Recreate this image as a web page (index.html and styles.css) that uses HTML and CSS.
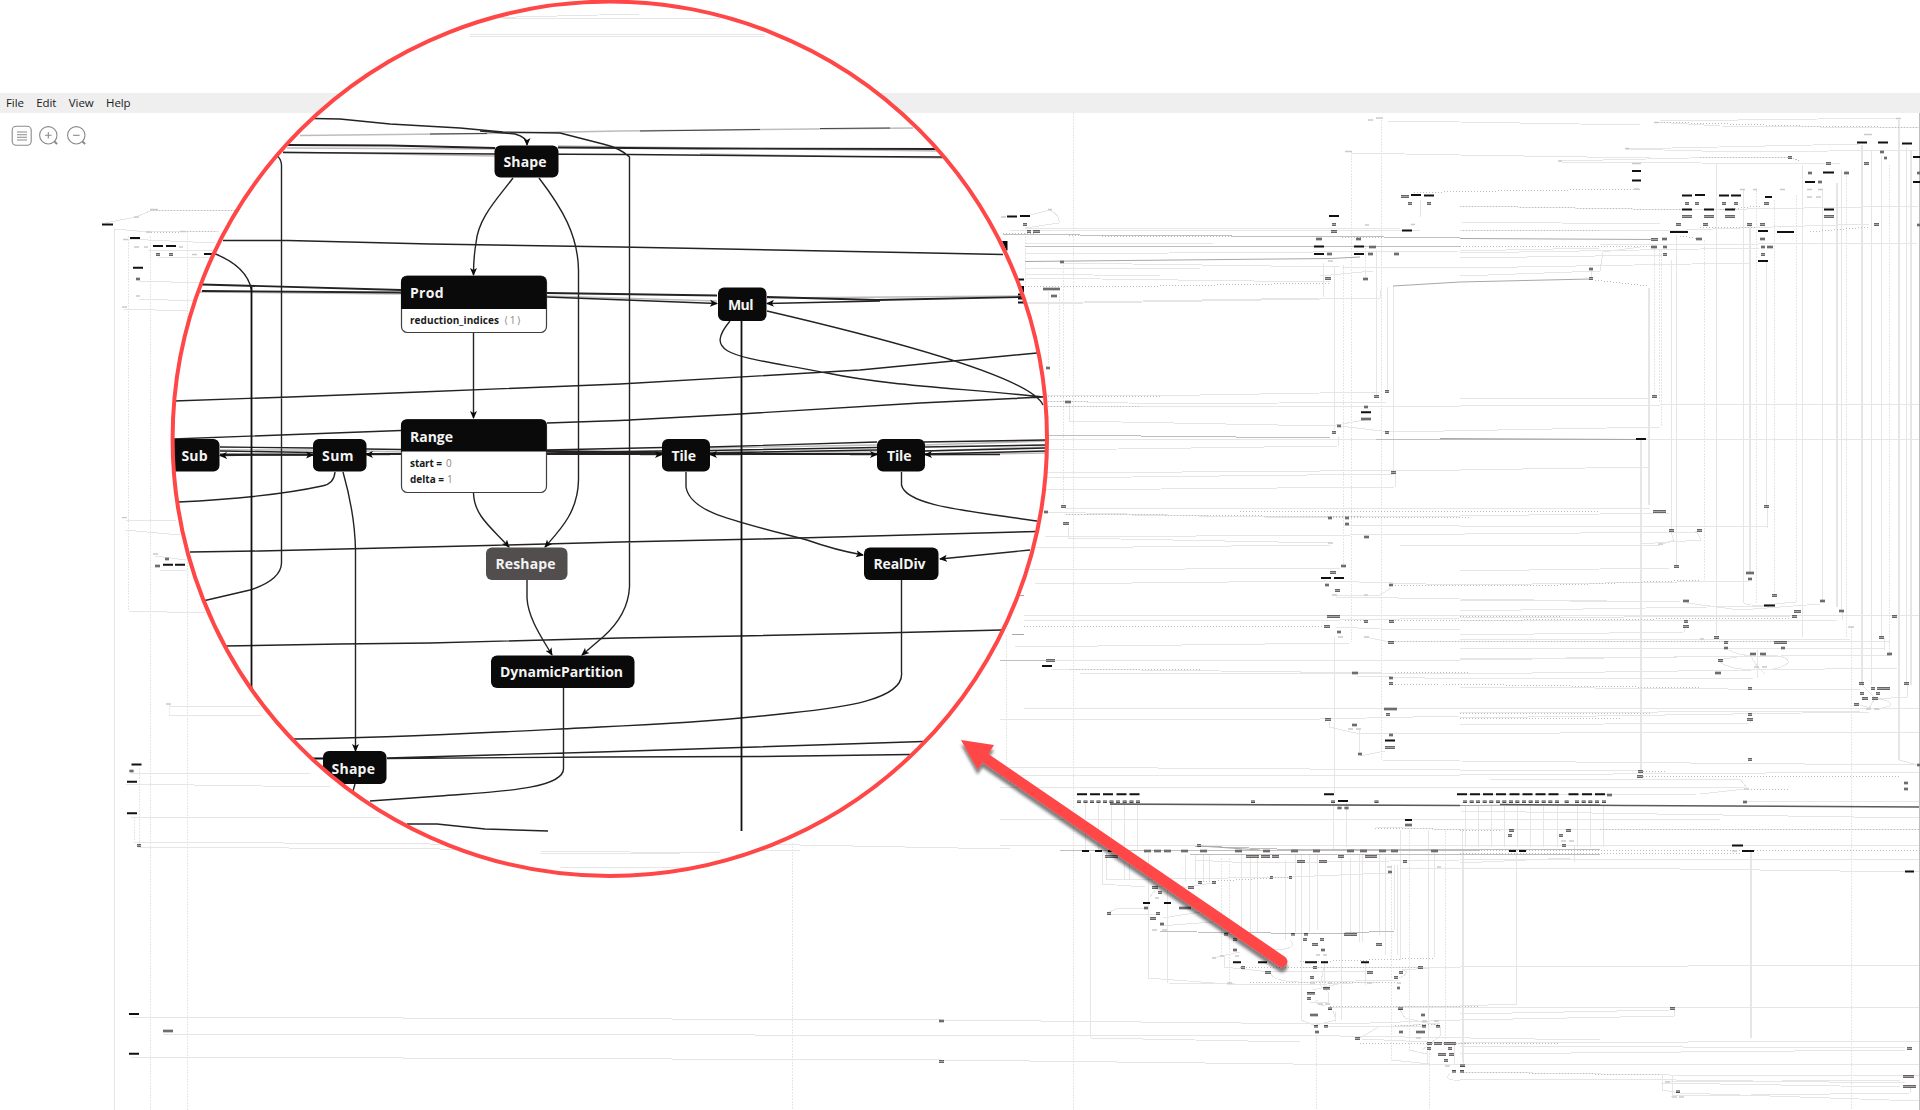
FILE: index.html
```html
<!DOCTYPE html>
<html lang="en">
<head>
<meta charset="utf-8">
<title>Model graph viewer</title>
<link rel="stylesheet" href="styles.css">
</head>
<body>
<div class="app">
  <nav class="menubar"><span>File</span><span>Edit</span><span>View</span><span>Help</span></nav>
  <div class="toolbar">
    <svg width="22" height="22" viewBox="0 0 22 22"><rect x="1.2" y="1.2" width="19" height="19" rx="4"/><path d="M6 7h10M6 9.7h10M6 12.3h10M6 15h10"/></svg>
    <svg width="22" height="22" viewBox="0 0 22 22"><circle cx="10.3" cy="10.3" r="8.7"/><path d="M10.3 7v6.600M7 10.300h6.600"/><path class="grip" d="M16.500 16.500l2.600 2.600"/></svg>
    <svg width="22" height="22" viewBox="0 0 22 22"><circle cx="10.3" cy="10.3" r="8.7"/><path d="M7 10.300h6.600"/><path class="grip" d="M16.500 16.500l2.600 2.600"/></svg>
  </div>

  <svg class="graph" width="1920" height="1110" viewBox="0 0 1920 1110">
    <defs>
      <marker id="tip" viewBox="0 0 8 8" refX="7" refY="4" markerWidth="8" markerHeight="8" markerUnits="userSpaceOnUse" orient="auto-start-reverse"><path d="M0 .5L8 4L0 7.500L2 4z"/></marker>
      <clipPath id="lens-clip"><circle cx="609.800" cy="438.800" r="437"/></clipPath>
      <filter id="drop" x="-10%" y="-10%" width="120%" height="125%"><feDropShadow dx="0" dy="5" stdDeviation="1.500" flood-color="#000" flood-opacity=".5"/></filter>
    </defs>

    <!-- long vertical edges of the overview -->
    <path class="faint dots" d="M150.500 236V1110M187.500 232V1110M128.500 236V611M139 768V845M134 817V841M169 705V715M213 255V300M229 256V300M792.500 843V1110M1006 635V765M1073.500 113V1110M1063 265V506M1048.500 292V365M1351.500 152V642M1381.500 120V760M1343.500 265V565M1059.500 293V378M1025.500 233V285M1365.500 245V278M1654.500 247V395M1659 250V402M1661 250V427M1704.500 240V580M1756 190V603M1774.500 200V595M1796.500 195V602M1846.500 170V638M1889.500 165V653M1851 627V1110M1391.700 865V1060M1221.700 858V955M1229.300 858V983M1316.500 1032V1110M1429 1050V1110M1409 830V1050M1445.700 830V1040"/>
    <path class="faint" d="M114.500 228V1110M1334.500 267V430M1334.500 637V790M1376.500 250V395M1387 287V390M1393.500 287V472M1420.500 200V217M1323 263V297M1671.500 260V530M1676.500 235V565M1716.500 164V635M1743.500 190V602M1766.500 262V506M1802.500 165V637M1822.500 190V600M1841.500 170V610M1871.500 150V685M1881.500 155V637M1906.500 147V682M1591 270V278M1463 850V1065M1516.500 850V1005M1574.500 845V862M1465 805V847M1478 805V847M1491.500 805V847M1504.500 805V847M1517.500 805V847M1530.500 805V847M1543.500 805V847M1557 805V847M1577 805V847M1590.500 805V847M1603.500 805V847M1085.500 803V850M1098.500 803V850M1111.500 803V850M1124.500 803V850M1137.500 803V850M1333 803V850M1346.500 803V847M1334.500 780V793M1090.700 853V1038M1102 853V885M1106.700 853V880M1124 858V880M1129 858V880M1148.300 853V978M1167.700 885V983M1185.700 855V882M1195 855V882M1203.300 855V882M1209.300 855V882M1241.500 853V933M1250 855V933M1257.700 855V933M1285.500 860V940M1295 855V932M1301 855V1020M1309 855V932M1317.300 855V930M1341.700 857V1020M1350.700 858V932M1359.500 855V942M1362.500 855V942M1379 855V935M1385 857V955M1394.500 865V930M1397.500 865V955M1400.700 830V960M1428.500 830V1040M1434.300 853V957M1462.700 830V1062M1324 963V988M1365 963V985M1335 1012V1022"/>
    <path class="faint wide" d="M1649 288V505M1750 225V572M1837 183V607M1862 145V683M1899 120V760M1911 150V685M1640.500 440V770M1751 852V1038"/>
    <path class="rim" d="M1919.500 113V1110"/>

    <!-- horizontal edges of the overview -->
    <path class="faint" d="M105 223L136 217L152 210H235M115 229L148 232L220 231M125 239L215 243M147 250L213 251M158 257H210M139 281L203 283M139 299L197 301M124 309L188 311M125 520L176 521M125 530L180 535M155 556L186 560M187 570H160M128 611L205 613M169 706H260M169 715H262M131 773L310 774M125 784L330 787M131 817L380 818M134 842L430 844M138 847L440 849M430 844L800 845L1010 849M440 849L800 851M131 1017L941 1020M163 1034L1340 1036L1600 1040M131 1057L941 1060M941 1020L1340 1024L1460 1020L1674 1016V1010M941 1060L1380 1065L1919 1064"/>
    <path class="faint" d="M1030 215L1050 210Q1060 215 1059 223L1025 228L1400 229M1010 231L1300 230L1420 231M1025 243L1213 244M1025 254L1460 251L1600 248M1063 263L1340 267L1460 268L1750 263M1025 268H1200M1025 274L1160 276H1320L1373 271M1025 278L1330 282M1025 303L1320 298M1025 304L1380 298V290M1387 121L1460 122L1640 125M1350 153L1460 155L1650 158M1660 121L1897 118M1655 122L1720 126L1919 128M1625 149L1860 144M1625 149L1740 152L1919 150M1560 161L1690 158L1790 157M1560 162L1840 164M1460 206L1690 210L1919 206M1460 222L1660 224M1460 230L1660 231L1740 228L1870 224M1600 245L1919 243M1460 253L1760 248M1460 258L1663 255M1460 276L1600 271L1603 252L1640 247"/>
    <path class="faint" d="M1045 396L1200 395L1380 392M1460 399L1650 398M1045 401L1170 404L1388 402M1048 406H1460L1660 405L1919 404M1069 404V421L1330 426L1365 420M1340 426L1390 432L1661 427M1045 439H1919M1045 450L1338 446V436M1045 473L1460 470L1649 467M1045 478L1395 474V487L1045 490M1065 509L1650 508M1045 512L1250 517L1460 516L1670 513M1065 514L1330 518M1045 537L1350 535L1697 532L1701 540L1640 544M1068 527V538L1330 543M1035 548L1330 545M1030 570L1340 568M1035 584L1325 581L1460 585L1750 581M1344 525L1460 526L1767 527V508M1671 533L1674 540L1660 545H1400M1334 595L1380 595L1391 588M1335 597L1460 599L1680 602M1024 615H1919M1024 620H1340L1460 618L1790 616M1336 627L1380 629L1460 630M1365 637L1390 642L1890 641M1015 647L1350 643M1000 660H1460L1750 656M1050 669L1140 670L1460 674L1898 668V655M1080 673H1460M1356 676L1460 679L1757 678V650M1024 708H1919M1000 719L1320 719L1460 716M1329 722V727L1360 734L1560 733L1919 732M1359 730V752M1360 756L1385 751M1382 760L1460 761L1919 765M1006 767L1460 770L1640 771M1000 775H1460L1919 772M1000 788L1460 787L1745 788M1490 779L1740 779L1747 788"/>
    <path class="faint" d="M1460 571L1670 568M1460 600L1680 602M1460 611L1770 606M1460 621L1842 620V612M1460 635L1684 632V627M1460 640L1850 639M1460 648L1884 649V638M1460 659L1890 655M1460 687L1860 690M1687 603L1740 610L1820 604M1743 602Q1745 606 1764 605L1796 602M1729 650Q1740 656 1750 655L1757 666L1765 674M1718 660L1750 655M1762 655Q1790 655 1788 663Q1780 670 1760 670Q1730 670 1720 662M1862 685L1875 698L1868 710M1856 704Q1870 708 1880 710M1876 699Q1893 700 1890 706L1875 710M1907 685V697L1875 699M1899 760L1918 765M1460 713L1860 711M1460 725L1750 723V719M1460 718L1870 712"/>
    <path class="faint" d="M1000 819L1460 819L1720 819M1460 811L1919 818M1460 795L1700 794L1745 789M1745 802L1919 801M1376 827L1460 830L1919 829M1000 845H1919M1195 860L1250 863L1460 860L1919 859M1102 884L1145 887M1106 880L1290 877L1388 873M1188 887L1212 883M1460 863L1570 858M1400 868H1600L1919 872M1300 967L1460 967L1919 965M1167 883L1188 888M1107 913L1116 909L1145 908M1109 914H1160M1150 897L1158 886L1178 887M1163 918L1200 912M1160 926L1225 921M1290 940Q1300 950 1270 950M1212 958L1240 952M1224 955V967L1270 972L1340 971L1367 972M1148 978L1240 985M1168 983L1300 985L1380 982M1271 974Q1275 983 1310 982L1400 980M1313 990L1350 981M1324 968L1320 985L1328 992V1002H1310M1333 1011L1336 1020L1316 1025M1318 1000Q1310 1003 1325 1006M1399 978Q1412 972 1402 970L1445 967M1301 1020L1316 1026M1090 1038L1300 1042M1360 1038L1380 1026H1425M1326 1027L1400 1026L1440 1023M1362 1039L1450 1043M1400 1010L1405 1018L1440 1026V1036L1422 1050M1409 1050L1427 1054M1427 1051V1064M1454 1045V1065M1450 1073Q1440 1083 1470 1079H1600L1905 1083M1391 1060L1430 1064H1464M1330 1008L1460 1006L1516 1004M1345 1007H1919M1460 1014L1670 1010M1460 1043L1919 1041M1460 1046L1905 1048M1460 1054L1905 1050M1463 1072L1670 1075L1919 1076M1662 1075V1090L1680 1093L1919 1101M1672 1075V1096L1910 1093V1088M1665 1082L1900 1080M1660 1083L1900 1087"/>
    <path class="medium dots" d="M150 210H235M148 233L215 231M1003 233L1100 236L1460 237.500M1025 287L1160 286L1330 283M1045 401H1090M1048 406H1140M1045 396H1160M1700 157H1790M1790 157L1800 161M1655 122L1800 126L1919 127.500M1414 193L1460 191.500L1640 189M1460 206L1690 210M1720 210L1760 206M1460 230L1600 231M1700 228L1755 227M1810 232L1870 227M1460 246H1650M1680 236L1700 239M1595 280L1649 286M1066 514L1460 518M1240 511H1600M1330 518L1470 517M1389 585H1560L1700 580M1460 616H1560M1389 621L1790 618M1024 626H1325M1345 620L1364 621M1070 669L1200 670M1389 684H1440L1700 688M1395 672H1470M1389 641H1790M1460 713H1650M1460 718H1620M1640 771H1665M1640 776H1900M1460 830H1500M1600 829.500H1919M1460 850H1919M1460 854L1740 853M1748 789H1790M1300 962L1434 958M1240 967H1420M1250 983L1400 982M1330 1006H1480M1360 1043H1470M1463 1072L1660 1075M1395 1026L1440 1024M1440 1043H1560M1200 882L1290 877M1375 828L1465 829.500"/>
    <path class="medium" d="M1003 234.500L1460 237.500M1025 246L1460 246.500M1045 435L1330 438M1000 660.500H1046M1195 846L1290 849.500L1600 849.500M1060 850.500H1460L1520 849M1190 854H1600M1160 931.500L1345 934M1345 933L1394 931M1376 439H1640"/>
    <path class="strong" d="M1025 261.500L1330 258.500L1360 257M1393 286L1460 282L1590 279M1460 238.500L1655 239.500M1440 438.500L1638 439.500M1110 804.500L1460 805.500L1600 804.500M1200 846L1260 850"/>
    <path class="trunk" d="M1110 804L1460 805.500M1500 804.500L1625 805.500L1919 807"/>

    <!-- overview nodes: filled, outlined, and pale ones -->
    <path class="node" d="M102 224.500h11M130 238h10M153 246h10M166 246h10M204 254h10M133 267.700h10M131.500 764.500h10M127 781.700h10M127 813.300h10M129 1014h10M129 1053.800h10M163 564.700h10M175 564.700h10M1007 216.500h10M1020 216h10M1329 216h10M1314 246.500h10M1354 246.500h10M1314 254h10M1354 254h10M1411 195h10M1424 195.500h10M1402 230.500h10M1361 412.300h10M1857 142.500h10M1878 142.500h10M1902 143.500h10M1823 172.500h11M1805 182h10M1913 157h7M1913 182h7M1632 171h9M1632 180.500h9M1682 195.500h10M1695 195h10M1719 195.500h10M1731 195.500h10M1765 197h7M1682 209.500h10M1704 209.500h10M1725 209.500h10M1824 209.500h10M1670 232h18M1758 231h10M1777 232h17M1758 261h10M1636 439h10M1321 578h10M1334 578h10M1042 666h10M1385 740.500h10M1077 794.300h10M1090 794.300h10M1103 794.300h10M1116.500 794.300h10M1129.500 794.300h10M1324 794.300h10M1338 801h10M1457 794.300h10M1470 794.300h10M1483 794.300h10M1496 794.300h10M1509.500 794.300h10M1522.500 794.300h10M1535.500 794.300h10M1548.500 794.300h10M1568.500 794.300h10M1582 794.300h10M1595 794.300h10M1764 605.500h11M1143 903h7M1164 903h7M1233 962.300h8M1258 962.300h9M1305 962.300h12M1321 962.300h7M1361 962.300h8M1082 851h7M1095 851h7M1108 851h7M1405 820h7M1509 851h7M1519 851h7M1732 845.500h11M1742 851h12M1905 871.500h9"/>
    <g class="hollow">
      <path id="boxes" d="M156 254.500h4M169 254.500h4M136 279h4M129.500 771h4M137 845.600h4M163 1031h10M155 566h5M165 559h4M939 1021h5M939 1061.500h5M1023 224.500h4M1027 231.500h4M1033 231.500h7M1060 262h4M1043 289h17M1051 296h6M1046 368h4M1065 402h6M1332 224.500h4M1331 231.500h6M1316 239h6M1356 239h5M1369 247h7M1327 254h5M1368 254h5M1394 254h5M1325 278.500h6M1363 279h5M1401 196.500h8M1408 203.500h4M1427 203.500h4M1385 391.500h4M1374 396.500h5M1364 407h4M1361 419h10M1337 426h4M1332 432.500h4M1385 432.500h4M1788 157.500h4M1880 152h4M1884 158h3M1826 163.500h5M1864 163.500h5M1808 173h4M1844 173h5M1818 182h4M1917 173h3M1685 203.500h4M1695 203.500h4M1722 203.500h4M1734 203.500h4M1764 203.500h5M1682 216.500h10M1704 216.500h10M1725 216.500h10M1824 216.500h10M1676 224.500h5M1703 224.500h5M1747 224.500h5M1760 224.500h5M1874 224.500h5M1917 225h3M1651 239.500h7M1662 239h5M1696 239h6M1760 239h5M1651 247h6M1663 247h4M1761 247h4M1767 247h6M1663 254.500h4M1761 254.500h4M1589 269h4M1589 278.500h4M1652 396.500h5M1391 472.500h5M1061 506.500h5M1044 512h4M1063 523.500h6M1328 518h4M1345 518h4M1345 524h4M1364 537h5M1341 566h5M1330 572.500h6M1325 585h4M1335 590.500h5M1389 585h4M1327 616.500h13M1364 621.500h4M1389 621.500h5M1324 626.500h6M1337 632h4M1388 642.500h6M1046 660.500h9M1352 673h6M1389 678h4M1389 683.500h4M1384 709h13M1386 714.500h4M1325 719.500h6M1352 725h5M1389 735h4M1385 747.500h10M1358 754h4
      M1077 801.700h4M1083.500 801.700h4M1090 801.700h4M1096.500 801.700h4M1103 801.700h4M1109.500 801.700h4M1116 801.700h4M1122.700 801.700h4M1129.500 801.700h4M1136 801.700h4M1251 801.700h4M1331 801.700h4M1374.500 801.700h4M1337.500 808h4M1344.500 808h4M1463 801.700h4M1469.700 801.700h4M1476 801.700h4M1482.700 801.700h4M1489.300 801.700h4M1496 801.700h4M1502.300 801.700h4M1509 801.700h4M1515.300 801.700h4M1522 801.700h4M1528.700 801.700h4M1535 801.700h4M1541.700 801.700h4M1548.300 801.700h4M1555 801.700h4M1564.700 801.700h4M1575 801.700h4M1581.700 801.700h4M1588.300 801.700h4M1595 801.700h4M1602 801.700h4M1607 795h5M1743 802h4M1904 783h4M1904 789h4M1653 511.500h13M1764 506.500h5M1669 530.500h5M1697 530.500h5M1674 566.500h5M1746 573h8M1748 579h4M1772 595.500h5M1683 601h6M1820 601h5M1794 611.500h7M1792 616.500h5M1839 611h5M1892 616.500h5M1684 621.500h4M1683 626.500h6M1714 637.500h5M1879 637.500h5M1724 642.500h4M1774 642.500h13M1724 648h4M1781 648h4M1750 654h6M1760 654h6M1887 654h5M1718 660.500h5M1715 673h6M1859 683.500h5M1904 683.500h5M1871 688.500h4M1877 688.500h13M1748 688.500h4M1860 693.500h4M1876 693.500h4M1862 698.500h6M1872 698.500h6M1854 704.500h5M1748 714.500h4M1747 719.500h6M1748 759.500h4M1638 771.500h5M1637 776.500h6M1917 765h3
      M1144 851h7M1154 851h7M1164 851h7M1181 851h7M1200 851h7M1235 851h7M1263 851h7M1291 851h7M1313 851h7M1347 851h7M1360 851h7M1379 851h7M1391 851h7M1431 851h7M1105 856.500h13M1246 856.500h13M1261 856.500h9M1272 856.500h7M1338 856.500h6M1365 856.500h12M1297 861.500h8M1319 861.500h8M1403 861.500h4M1388 872h4M1270 877.500h3M1289 877.500h3M1198 882.500h4M1212 882.500h4M1152 887.500h6M1188 887.500h6M1158 892.500h4M1144 908h4M1179 908h12M1107 913.500h4M1156 913.500h4M1150 918.500h6M1160 924h4M1197 845.500h4M1224 934.300h4M1291 934.300h4M1304 934.300h4M1344 934.500h13M1233 939.500h4M1303 939.500h4M1320 939.500h4M1312 944.500h6M1376 944.500h6M1233 950h4M1321 950h4M1241 967.500h4M1313 967.500h4M1418 967.500h5M1265 972.500h6M1367 972.500h6M1399 972.500h4M1310 977.500h4M1394 977.500h4M1323 988.300h7M1397 988h3M1307 993.300h8M1307 998.500h4M1328 1008.700h4M1398 1008.700h5M1310 1015h8M1421 1015h4M1314 1026.300h4M1324 1026.300h4M1422 1026.300h4M1436 1026.300h4M1315 1032h4M1399 1032h4M1416 1032h9M1355 1038.500h5M1427 1043.500h5M1434 1043.500h8M1444 1043.500h12M1427 1048.500h4M1448 1048.500h4M1438 1054.500h8M1449 1054.500h5M1444 1060.500h4M1460 1065.700h5M1452 1071.300h4M1460 1071.300h4M1405 825h7M1509 830.500h5M1508 835.500h4M1566 830.500h5M1559 835.500h4M1562 845.500h4M1670 1008.500h5M1907 1048.500h5M1903 1076.500h11M1903 1086.500h13M1676 1091.700h4"/>
      <use class="core" href="#boxes"/>
    </g>
    <path class="pale" d="M150 209.500h8M134 217h5M146 232h5M180 231.500h6M123 239.500h5M134 247h5M144 247h4M179 247h4M192 254.500h5M136 296h4M122 307h5M122 517.600h5M153 554h5M166 704h5M1001 217h5M1048 209.500h4M1345 151.500h7M1368 120h5M1376 118h7M1365 225h4M1328 261h5M1411 224.500h4M1632 163.500h9M1634 189h5M1654 122.500h4M1625 148.500h4M1558 161h4M1864 134.500h8M1896 118.500h5M1740 189.500h5M1753 189.500h4M1780 189.500h5M1807 189.500h5M1818 189.500h5M1807 197h5M1816 197h5M1328 543h5M1332 595h5M1364 595h4M1338 637h5M1364 637h5M1348 729h5M1356 729h5M1658 544h5M1700 639h4M1754 667h5M1762 667h5M1848 627h6M1866 709h5M1874 709h5M1744 789h5M1387 867h5M1437 867h4M1155 898h4M1152 930h5M1162 930h5M1220 956h4M1235 956h4M1316 955h4M1323 955h4M1212 958h4M1227 983h5M1310 983h5M1328 983h4M1367 983h5M1397 983h4M1318 1004h5M1325 1004h5M1422 1021h5M1434 1021h5M1416 1038h5M1445 1066h5M1561 841h5M1569 841h5M1732 851h5M1665 1082h5M1672 1097h5M1679 1097h5"/>

    <!-- magnifier lens -->
    <circle class="lens" cx="609.800" cy="438.800" r="437"/>
    <g clip-path="url(#lens-clip)">
      <path class="faint" d="M475 18L640 14M500 18L720 19M470 34.500H765M470 36.500H765M540 851L720 853M540 853L680 854M560 867L700 868"/>
      <path class="soft" d="M300 135.500L487 133.500L620 131L760 129.500L913 128M287 148L495 149M558 146L940 151M283 152L495 156M700 154L945 158M200 292L401 294M547 296L717 301M767 298L1022 296M220 450L313 450M366 451L401 452M547 451L663 451M709 448L877 445M709 452L877 452M924 445L1046 441M924 451L1046 447M924 455L1046 453"/>
      <path class="edge thin" d="M640 131L760 129.500M820 128.500L890 128M430 134L487 133.500"/>
      <path class="edge heavy" d="M287 145L390 145.500L495 148M558 147.500L700 148.500L940 149M202 284.500L401 290M202 291L401 292.500M547 293L717 295.500M767 297L877 300L1022 297M547 454H650M547 451L663 453M709 454H877M220 454.500H313M366 454H401"/>
      <path class="edge" d="M313 118.500L340 119L390 124L460 128L503 132L560 133L603 144Q620 148 629.500 157V587Q628 615 603 637M283 152.500L495 154L630 154.500L843 156.500L943 157M276 155Q281 158 281.500 165V563Q281 580 250 590L205 600.500M223 240.500L288 240.500L430 244L620 247L700 248.500L930 253L1003 254.500M213 253Q247 266 251.500 290M174 401L290 397L420 392L620 384L860 370L1037 353M173 439L401 430.500M547 423L620 420.500L740 414L920 403L1043 397M220 447L313 448M220 451L313 452.500M366 449L401 449.500M547 450L663 447.500M547 453L663 451M709 447L877 442M709 450.500L877 447.500M709 453L877 450M924 442L1046 440M924 447L1046 445M924 451L1046 448M924 454L1046 451M335 472Q334 484 322 486C290 493 240 499 178 502M190 552L260 551L487 545.500L620 542L760 539L1037 531.500M225 646L340 644L430 643L620 638L740 636L880 633L1002 630M730 321C700 357 740 356 827 373C890 386 960 388 1043 397M767 311C870 335 1030 375 1043 405M901.500 472V485C906 506 970 511 1037 521M901.500 580V672C905 700 840 708 790 713C730 720 670 724 600 727C500 732 400 738 293 739M563.500 688V768C565 790 490 792 440 796L370 801M387 758.500L600 757L760 756.500L910 754.500M387 758L600 752L740 747.500L923 741.500M355 784L353 791M407 824L437 824L485 829L548 831"/>
      <path class="edge main" d="M251.500 287V690M741.500 321V831M313 758.500H323"/>
      <g class="edge arrows">
        <path d="M480 131L515 134Q527 137 527 145"/>
        <path d="M513 178C498 198 478 218 476 243Q473.500 257 473.500 275"/>
        <path d="M539 178C562 208 578 235 578.500 270V480C578 512 560 530 545 547"/>
        <path d="M473.500 333V418"/>
        <path d="M473.500 493C474 516 492 528 509 547"/>
        <path d="M527 580V598C528 618 542 638 552 655"/>
        <path d="M603 637L582 655"/>
        <path d="M343 472C351 500 355 523 355.500 550V751"/>
        <path d="M547 297L717 303.500"/>
        <path d="M880 301L767 303.500"/>
        <path d="M686 472V487C690 512 730 520 807 540Q835 550 863 555"/>
        <path d="M1030 550L940 559"/>
        <path d="M266 455L220 455.500"/><path d="M266 455L313 455"/>
        <path d="M390 454.500H366"/><path d="M640 454.500H662"/><path d="M740 454.500H710"/><path d="M850 454.500H877"/><path d="M1000 454.500H925"/>
      </g>

      <rect class="box" x="170" y="439" width="49.500" height="32.500" rx="6"/>
      <rect class="box" x="313" y="439" width="53.500" height="32.500" rx="6"/>
      <rect class="box" x="494.500" y="145.500" width="64" height="32" rx="6"/>
      <rect class="box" x="718" y="287.500" width="48.500" height="33.500" rx="6"/>
      <rect class="box" x="662" y="439" width="48" height="32.500" rx="6"/>
      <rect class="box" x="877" y="439" width="48" height="32.500" rx="6"/>
      <rect class="box picked" x="486" y="547.500" width="81.500" height="32.500" rx="6"/>
      <rect class="box" x="864" y="547.500" width="74.500" height="32.500" rx="6"/>
      <rect class="box" x="491" y="655.500" width="143.500" height="32.500" rx="6"/>
      <rect class="box" x="323" y="751" width="63.500" height="33" rx="6"/>
      <rect class="panel" x="401.500" y="276" width="145" height="56.500" rx="6"/>
      <path class="box" d="M401 309V282q0-6 6-6h133.500q6 0 6 6v27z"/>
      <rect class="panel" x="401.500" y="419.500" width="145" height="73" rx="6"/>
      <path class="box" d="M401 451.500V425.500q0-6 6-6h133.500q6 0 6 6v26z"/>

      <g class="label">
        <text x="503.500" y="167" textLength="43">Shape</text>
        <text x="410" y="298" textLength="33.500">Prod</text>
        <text x="410" y="441.500" textLength="43">Range</text>
        <text x="181.500" y="461.200" textLength="26">Sub</text>
        <text x="322" y="461.200" textLength="31.500">Sum</text>
        <text x="728" y="309.500" textLength="25.500">Mul</text>
        <text x="671.500" y="461.200" textLength="24.500">Tile</text>
        <text x="887" y="461.200" textLength="24.500">Tile</text>
        <text x="495.500" y="569.200" textLength="60">Reshape</text>
        <text x="873.500" y="569.200" textLength="52">RealDiv</text>
        <text x="500" y="677.200" textLength="123">DynamicPartition</text>
        <text x="331.500" y="773.500" textLength="43.500">Shape</text>
      </g>
      <g class="attr">
        <text x="410" y="323.500" textLength="89">reduction_indices</text>
        <text class="value" x="504" y="323.500" textLength="17">⟨1⟩</text>
        <text x="410" y="467.300" textLength="32">start =</text><text class="value" x="446" y="467.300">0</text>
        <text x="410" y="483.300" textLength="34">delta =</text><text class="value" x="447" y="483.300">1</text>
      </g>
    </g>
    <path class="edge main" d="M1018 279.500h6M1018 294.500h5M1018 298.500h5M1018 302.500h6"/>
    <path class="strong" d="M1012 634.500h12M1018 595.500h6"/>
    <path class="clipped" d="M1002 241h5.500v9.500h-1zM1020 286h4v6h-2z"/>
    <circle class="ring" cx="609.800" cy="438.800" r="437.200"/>

    <!-- callout arrow -->
    <path class="callout" filter="url(#drop)" d="M961 740L994 745L988.500 754L1284.500 956.500A5.500 5.500 0 0 1 1279 966.500L982.500 762.500L977.500 769.500Z"/>
  </svg>
</div>
</body>
</html>
```
FILE: styles.css
```css
body {
  margin: 0;
  background: #fff;
  font-family: "Open Sans", "Noto Sans", sans-serif;
  overflow: hidden;
}

.app {
  position: relative;
  display: flex;
  flex-direction: column;
  width: 1920px;
  height: 1110px;
  padding-top: 93px;
  box-sizing: border-box;
}

.menubar {
  display: flex;
  align-items: center;
  gap: 12.5px;
  height: 20px;
  padding-left: 6px;
  background: #efefef;
  color: #1c1c1c;
  font-size: 11.5px;
  letter-spacing: -.1px;
  line-height: 20px;
}

.toolbar {
  display: flex;
  gap: 5.3px;
  padding: 12px 0 0 11px;
}

.toolbar svg {
  fill: none;
  stroke: #8a8a8a;
  stroke-width: 1.1;
}

.toolbar .grip { stroke-width: 2; }

.graph {
  position: absolute;
  inset: 0;
  fill: none;
}

.faint { stroke: #e6e6e6; shape-rendering: crispEdges; }
.wide { stroke-width: 2; }
.dots { stroke-dasharray: 2 1; }
.medium { stroke: #c0bdbd; shape-rendering: crispEdges; }
.medium.dots { stroke-dasharray: 1 2; }
.strong { stroke: #a9a6a6; }
.trunk { stroke: #5c5959; stroke-width: 1.5; }
.rim { stroke: #c0bdbd; }

.node { stroke: #111; stroke-width: 2; }
.hollow { stroke: #383535; stroke-width: 2.5; }
.core { stroke: #b5b1b1; stroke-width: .9; }
.pale { stroke: #cbc9c9; stroke-width: 1.3; }

.lens { fill: #fff; }
.ring { stroke: #ff4747; stroke-width: 4; }

.edge { stroke: #242222; stroke-width: 1.4; }
.thin { stroke-width: .8; }
.soft { stroke: #bfbbbb; stroke-width: 1.6; }
.heavy { stroke-width: 1.8; }
.main { stroke: #111; stroke-width: 1.8; }
.arrows path { marker-end: url(#tip); }
#tip path { fill: #0a0a0a; stroke: none; }

.box { fill: #0a0a0a; }
.picked { fill: #524e4d; }
.panel { fill: #fff; stroke: #403d3d; stroke-width: 1.2; }
.clipped { fill: #0a0a0a; }

.label { fill: #f4f4f4; font-size: 14px; font-weight: 700; }
.attr { fill: #1a1a1a; font-size: 10px; font-weight: 700; }
.attr .value { fill: #8d8888; font-family: "Open Sans", "DejaVu Sans", sans-serif; font-weight: 400; }

.callout { fill: #ff4747; }
```
